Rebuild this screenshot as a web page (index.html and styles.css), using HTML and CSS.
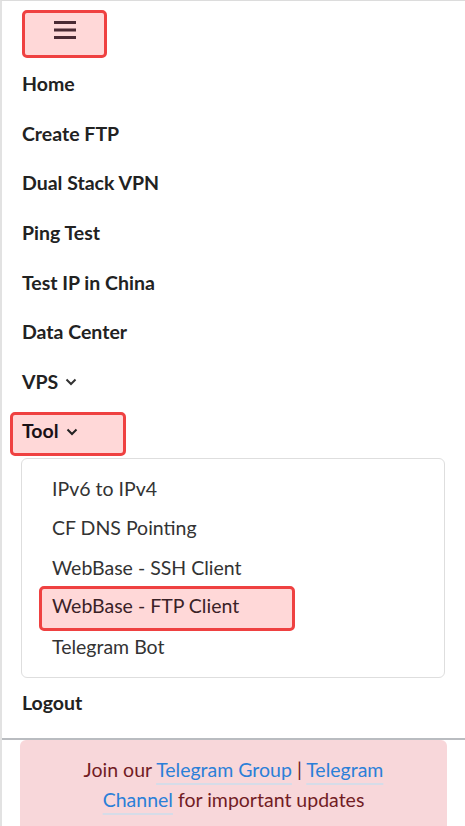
FILE: index.html
```html
<!DOCTYPE html>
<html>
<head>
<meta charset="utf-8">
<link rel="stylesheet" href="styles.css">
</head>
<body>
<div class="page">
  <nav class="nav">
    <div class="toggle-row">
      <button class="toggle" aria-label="menu">
        <svg width="24" height="20" viewBox="0 0 24 20"><path d="M1 2.5h22M1 10h22M1 17.5h22" stroke="#4a2a33" stroke-width="3"/></svg>
      </button>
    </div>
    <ul class="menu">
      <li><a class="item">Home</a></li>
      <li><a class="item">Create FTP</a></li>
      <li><a class="item">Dual Stack VPN</a></li>
      <li><a class="item">Ping Test</a></li>
      <li><a class="item">Test IP in China</a></li>
      <li><a class="item">Data Center</a></li>
      <li><a class="item">VPS <svg class="chev" width="12" height="8" viewBox="0 0 12 8"><path d="M1.5 1.5l4.5 4.5 4.5-4.5" fill="none" stroke="#333" stroke-width="2"/></svg></a></li>
      <li><a class="item mark-tool">Tool <svg class="chev" width="12" height="8" viewBox="0 0 12 8"><path d="M1.5 1.5l4.5 4.5 4.5-4.5" fill="none" stroke="#222" stroke-width="2"/></svg></a></li>
      <li class="drop-wrap">
        <ul class="dropdown">
          <li><a class="sub">IPv6 to IPv4</a></li>
          <li><a class="sub">CF DNS Pointing</a></li>
          <li><a class="sub">WebBase - SSH Client</a></li>
          <li><a class="sub mark-sub">WebBase - FTP Client</a></li>
          <li><a class="sub">Telegram Bot</a></li>
        </ul>
      </li>
      <li><a class="item">Logout</a></li>
    </ul>
  </nav>
  <div class="alert">
    Join our <a class="lnk">Telegram Group</a> | <a class="lnk">Telegram Channel</a> for important updates
  </div>
</div>
</body>
</html>
```

FILE: styles.css
```css
* { box-sizing: border-box; }
html, body { margin: 0; padding: 0; background: #fff; }
body { font-family: Lato, "Open Sans", sans-serif; color: #222; }
.page {
  min-height: 826px;
  border-left: 2px solid #e2e2e2;
  border-top: 1px solid #dcdcdc;
}
.nav {
  padding: 9px 0 0 0;
  border-bottom: 2px solid #b9bcc0;
}
.toggle-row { padding-left: 20px; }
.toggle {
  display: flex;
  align-items: center;
  justify-content: center;
  width: 85px;
  height: 48px;
  padding: 0 0 9px 0;
  background: #ffd8d8;
  border: 3.5px solid #ef4141;
  border-radius: 5px;
  margin: 0;
  cursor: pointer;
}
.menu { list-style: none; margin: 0; padding: 1px 0 10px 0; }
.menu li { list-style: none; }
.item {
  display: flex;
  align-items: center;
  gap: 7px;
  padding: 0 0 0 20px;
  height: 49.6px;
  font-size: 19.5px;
  font-weight: 700;
  color: #222;
}
.chev { margin-top: 2px; }
.mark-tool {
  width: 116px;
  height: 44px;
  margin: 5.5px 0 0 8px;
  padding-left: 9px;
  padding-bottom: 6px;
  background: #ffd8d8;
  border: 3.5px solid #ef4141;
  border-radius: 5px;
  color: #1a1016;
}
.drop-wrap { padding: 2px 20px 0 19px; }
.dropdown {
  list-style: none;
  margin: 0;
  padding: 10px 0 11px;
  border: 1px solid #dedede;
  border-radius: 6px;
}
.sub {
  display: flex;
  align-items: center;
  height: 39.5px;
  padding-left: 30px;
  font-size: 19.5px;
  color: #333;
}
.mark-sub {
  width: 256px;
  height: 45px;
  margin: -1.5px 0 -4px 17px;
  padding-left: 10px;
  padding-bottom: 5px;
  background: #ffd8d8;
  border: 3.5px solid #ef4141;
  border-radius: 5px;
  color: #3a2227;
}
.alert {
  margin: 0 18px 0 18px;
  background: #f8d7da;
  color: #721c24;
  border-radius: 6px 6px 0 0;
  padding: 15px 40px 20px;
  text-align: center;
  font-size: 19.5px;
  line-height: 30px;
  min-height: 90px;
}
.lnk {
  color: #2b7fd8;
  text-decoration: underline;
  text-decoration-color: #d6dce8;
  text-decoration-thickness: 1.5px;
  text-underline-offset: 6px;
}
```
